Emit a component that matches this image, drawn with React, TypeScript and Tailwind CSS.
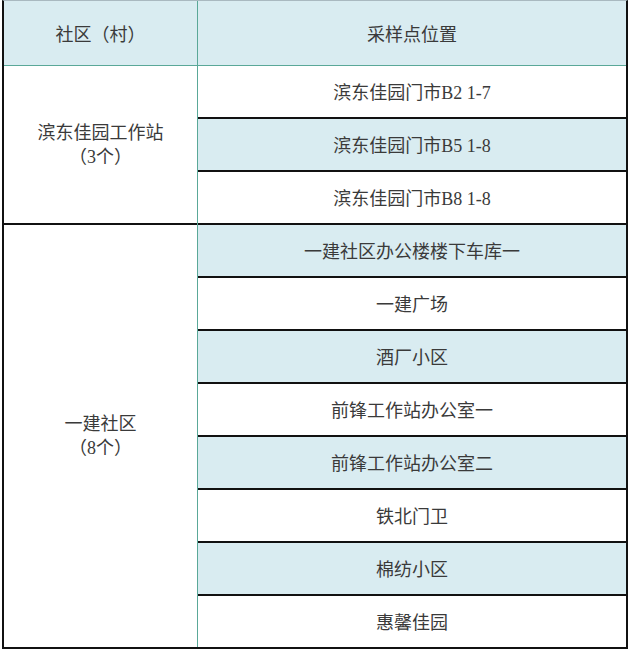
const rows = [
  { name: '滨东佳园门市B2 1-7', shaded: false },
  { name: '滨东佳园门市B5 1-8', shaded: true },
  { name: '滨东佳园门市B8 1-8', shaded: false },
  { name: '一建社区办公楼楼下车库一', shaded: true },
  { name: '一建广场', shaded: false },
  { name: '酒厂小区', shaded: true },
  { name: '前锋工作站办公室一', shaded: false },
  { name: '前锋工作站办公室二', shaded: true },
  { name: '铁北门卫', shaded: false },
  { name: '棉纺小区', shaded: true },
  { name: '惠馨佳园', shaded: false },
]

export default function App() {
  return (
    <div className="w-[629px] h-[649px] bg-white font-['Liberation_Serif','Noto_Sans_CJK_SC',serif] text-[18px] text-[#3a3a3a]">
      <div className="ml-[2px] w-[626px] border-t border-t-[#a9b9c0] border-l-2 border-r-2 border-b-2 border-l-[#111] border-r-[#111] border-b-[#111]">
        {/* 表头 */}
        <div className="flex h-[65px] bg-[#d9ecf1] border-b border-b-[#5aa898]">
          <div className="w-[194px] flex items-center justify-center border-r border-r-[#5aa898] pt-[4px]">社区（村）</div>
          <div className="flex-1 flex items-center justify-center pt-[4px]">采样点位置</div>
        </div>

        <div className="flex">
          {/* 社区 */}
          <div className="w-[194px] flex flex-col border-r border-r-[#5aa898]">
            <div className="h-[159px] flex flex-col items-center justify-center leading-[24px] border-b-2 border-b-[#111]">
              <span>滨东佳园工作站</span>
              <span>（3个）</span>
            </div>
            <div className="flex-1 flex flex-col items-center justify-center leading-[24px]">
              <span>一建社区</span>
              <span>（8个）</span>
            </div>
          </div>

          {/* 采样点 */}
          <div className="flex-1 flex flex-col">
            {rows.map((r, i) => (
              <div
                key={r.name}
                className={`flex items-center justify-center pt-[3px] ${i < rows.length - 1 ? 'h-[53px] border-b-2 border-b-[#111]' : 'h-[51px]'} ${r.shaded ? 'bg-[#d9ecf1]' : 'bg-white'}`}
              >
                {r.name}
              </div>
            ))}
          </div>
        </div>
      </div>
    </div>
  )
}
